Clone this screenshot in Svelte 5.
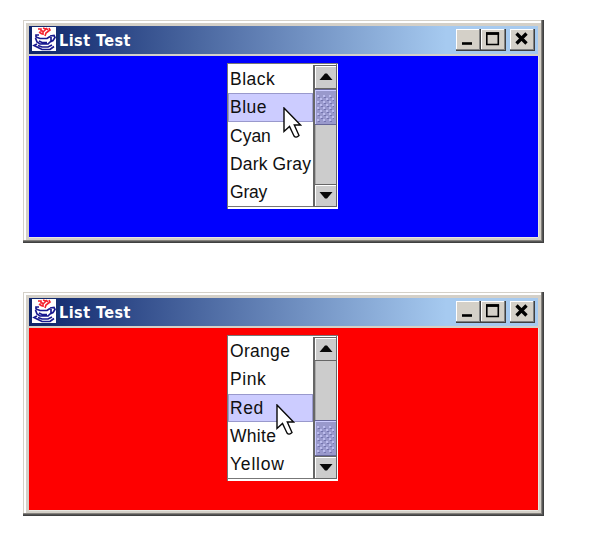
<script>
  const windows = [
    { id: 'blue', color: '#0000fe', height: 223, items: ['Black', 'Blue', 'Cyan', 'Dark Gray', 'Gray'], selected: 1, before: 0, after: 59, cx: 283, cy: 87 },
    { id: 'red', color: '#fe0000', height: 224, items: ['Orange', 'Pink', 'Red', 'White', 'Yellow'], selected: 2, before: 59, after: 0, cx: 276, cy: 112 }
  ];
  const spacing = { Black: 0.5, Blue: 0.5, Cyan: 0, 'Dark Gray': 0.15, Gray: -0.2, Orange: 0.3, Pink: 0.6, Red: 0.6, White: 0.3, Yellow: 0.8 };
</script>

{#snippet java()}
  <svg class="logo" viewBox="0 0 24 24">
    <rect width="24" height="24" fill="#fff" />
    <g fill="none" stroke="#f5202c" stroke-width="1.6">
      <path d="M6 2h3v2h2M7 5l3 2M11 1l3 1-3 3v3M17 1l1 2-4 3-1 3M14 1l2 2" />
    </g>
    <g fill="none" stroke="#18188f" stroke-width="1.7">
      <path d="M7 8H4v2l4 1.5h7L18 9.500M3.500 11l1.500 4 3 2h8l3-3V10M18 9l4-.5 1 2-2 3-3 1.500M7 14l3 1.500h5M5 17l-3 1.500 4 2 4 2h8l4-3M6 18.500l4 1.500h6l4-2" />
    </g>
  </svg>
{/snippet}

{#snippet arrow(down)}
  <div class="arrow">
    <svg width="14" height="7" viewBox="0 0 14 7"><path d={down ? 'M.5 0H13.500L8 6.500H6Z' : 'M6 .5H8L13.500 7H.5Z'} fill="#080808" /></svg>
  </div>
{/snippet}

<main>
  {#each windows as w (w.id)}
    <section class="window" style:height="{w.height}px">
      <header>
        {@render java()}
        <span class="title">List Test</span>
        <div class="controls">
          <div class="button"><svg width="20" height="18"><path d="M4 13.500h10" stroke="#000" stroke-width="2.6" /></svg></div>
          <div class="button"><svg width="20" height="18"><path d="M3.800 3.500h11.500v11h-11.500z" fill="none" stroke="#000" stroke-width="1.6" /><path d="M3 3.500h13.100" stroke="#000" stroke-width="2.8" /></svg></div>
          <div class="button close"><svg width="20" height="18"><path d="M4.500 3.500l10 10M14.500 3.500l-10 10" stroke="#000" stroke-width="3.3" /></svg></div>
        </div>
      </header>
      <div class="content" style:background={w.color}>
        <div class="pane">
          <div class="list">
            {#each w.items as item, i}
              <div class="item" class:selected={i === w.selected} style:letter-spacing="{spacing[item]}px">{item}</div>
            {/each}
          </div>
          <div class="scroll">
            {@render arrow(false)}
            <div style:height="{w.before}px"></div>
            <div class="thumb">
              <svg width="17" height="27">
                <defs>
                  <pattern id="grip-{w.id}" width="6" height="6" patternUnits="userSpaceOnUse">
                    <path d="M0 1h2M3 4h2" stroke="#c8c8fa" stroke-width="1.4" />
                    <path d="M1 2.500h2M4 5.500h2" stroke="#7474b0" stroke-width="1.2" />
                  </pattern>
                </defs>
                <rect width="17" height="27" fill="url(#grip-{w.id})" />
              </svg>
            </div>
            <div style:height="{w.after}px"></div>
            {@render arrow(true)}
          </div>
        </div>
      </div>
      <svg class="cursor" style:left="{w.cx - 23}px" style:top="{w.cy}px" width="19" height="32" viewBox="0 0 19 32">
        <path d="M1 1V24.500L6.500 19.500L11 29Q13 31.500 16 28.500L11.300 18H17.500Z" fill="#fff" stroke="#080808" stroke-width="1.4" />
      </svg>
    </section>
  {/each}
</main>

<style>
  :global(body) { margin: 0; background: #fff; }
  * { box-sizing: border-box; }
  main { width: 611px; height: 552px; padding: 20px 0 0 23px; display: flex; flex-direction: column; gap: 49px; }
  .window {
    position: relative; width: 521px; flex: none; padding: 6px; display: flex; flex-direction: column;
    background: #d4d0c8;
    box-shadow: inset -1px -1px #404040, inset -2px -2px #555, inset -3px -3px #85827d, inset 1px 1px #d4d0c8, inset 3px 3px #fff;
  }
  header {
    height: 28px; flex: none; margin-bottom: 2px; padding: 1px 3px 0 3px; display: flex;
    background: linear-gradient(90deg, #0c246a, #a6caf0 82%);
  }
  .logo { width: 24px; height: 24px; flex: none; }
  .title { margin-left: 3px; color: #fff; font: bold 16px/27px "DejaVu Sans Condensed", "DejaVu Sans", sans-serif; font-stretch: condensed; letter-spacing: 0.5px; white-space: pre; }
  .controls { margin: 2px 0 0 auto; display: flex; }
  .button { width: 25px; height: 22px; padding: 1px 2px; background: #d4d0c8; box-shadow: inset -1px -1px #404040, inset -2px -2px #808080, inset 1px 1px #fff; }
  .close { margin-left: 4px; }
  svg { display: block; }
  .content { flex: 1; padding: 7px 0 0 198px; box-shadow: 0 1px #e8e6e0, 1px 0 #e8e6e0; }
  .pane { width: 111px; height: 146px; padding: 2px 0 0 1px; display: flex; background: #fff; box-shadow: inset 1px 1px #777, inset -1px -2px #fff, inset -2px -3px #777; }
  .list { width: 85px; display: flex; flex-direction: column; flex: none; }
  .item { height: 28.3px; padding-left: 2px; color: #101010; font: 17.5px/29px "Liberation Sans", Arial, sans-serif; white-space: pre; }
  .selected { background: #ccccff; box-shadow: inset 0 0 0 1px #9999cc; }
  .scroll { width: 24px; height: 142px; background: #cccccc; border-left: 2px solid #666; border-right: 1px solid #666; box-shadow: inset 1px 0 #aaa; }
  .arrow { height: 23.5px; display: flex; align-items: center; justify-content: center; background: #ccc; border-bottom: 1px solid #666; border-top: 1px solid #666; box-shadow: inset 1px 1px #fff; }
  .thumb { height: 36px; padding: 5px 2px; background: #9999cc; border-top: 1px solid #666699; border-bottom: 1px solid #666699; box-shadow: inset 1px 1px #ccccff; }
  .cursor { position: absolute; }
</style>
